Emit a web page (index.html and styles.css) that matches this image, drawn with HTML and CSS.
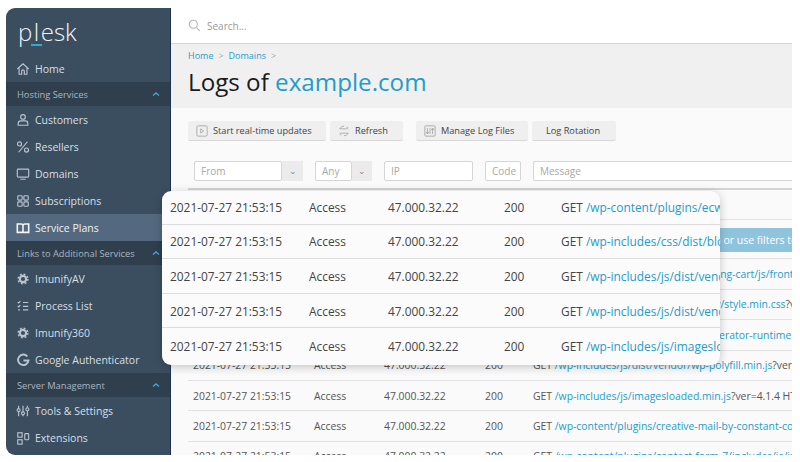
FILE: index.html
```html
<!DOCTYPE html>
<html lang="en">
  <head>
    <meta charset="UTF-8" />
    <meta name="viewport" content="width=device-width, initial-scale=1.0" />
    <title>Logs of example.com</title>
    <link rel="stylesheet" href="styles.css">
  </head>
  <body>
    <div class="window">
      <aside class="sidebar">
        <div class="logo">p<span class="logo-l">l</span>esk</div>
        <a class="nav-item">
          <svg viewBox="0 0 16 16"><path d="M1.5 8 8 2l6.5 6M3.5 7v7h3v-3.5a1.5 1.5 0 0 1 3 0V14h3V7"/></svg>
          Home
        </a>
        <div class="nav-section">Hosting Services <svg viewBox="0 0 10 6"><path d="M2 4.5 5 2l3 2.5"/></svg></div>
        <a class="nav-item">
          <svg viewBox="0 0 16 16"><circle cx="8" cy="4.5" r="2.7"/><path d="M2.5 14v-2c0-2 1.5-3 3-3h5c1.5 0 3 1 3 3v2z"/></svg>
          Customers
        </a>
        <a class="nav-item">
          <svg viewBox="0 0 16 16"><circle cx="4" cy="4.5" r="2.3"/><circle cx="12" cy="11.5" r="2.3"/><path d="M13 2 3 14"/></svg>
          Resellers
        </a>
        <a class="nav-item">
          <svg viewBox="0 0 16 16"><rect x="1.5" y="2.5" width="13" height="9" rx="1"/><path d="M5 14h6"/></svg>
          Domains
        </a>
        <a class="nav-item">
          <svg viewBox="0 0 16 16"><rect x="2" y="2" width="5" height="5" rx="1"/><rect x="9" y="2" width="5" height="5" rx="1"/><rect x="2" y="9" width="5" height="5" rx="1"/><rect x="9" y="9" width="5" height="5" rx="1"/></svg>
          Subscriptions
        </a>
        <a class="nav-item active">
          <svg viewBox="0 0 16 16"><path class="book" d="M1.5 3.5H6c1 0 2 .5 2 1.5 0-1 1-1.5 2-1.5h4.5V13H10c-1 0-2 .5-2 1 0-.5-1-1-2-1H1.5zM8 5v9"/></svg>
          Service Plans
        </a>
        <div class="nav-section">Links to Additional Services <svg viewBox="0 0 10 6"><path d="M2 4.5 5 2l3 2.5"/></svg></div>
        <a class="nav-item">
          <svg viewBox="0 0 16 16"><circle class="gear-ring" cx="8" cy="8" r="3.6"/><circle class="gear-teeth" cx="8" cy="8" r="5.6"/></svg>
          ImunifyAV
        </a>
        <a class="nav-item">
          <svg viewBox="0 0 16 16"><path d="M2 3.5 3 4.5 5 2.5M8 4h6M2 8l1 1 2-2M8 8.5h6M2.5 12.5h2M8 12.5h6"/></svg>
          Process List
        </a>
        <a class="nav-item">
          <svg viewBox="0 0 16 16"><circle class="gear-ring" cx="8" cy="8" r="3.6"/><circle class="gear-teeth" cx="8" cy="8" r="5.6"/></svg>
          Imunify360
        </a>
        <a class="nav-item">
          <svg viewBox="0 0 16 16"><path class="thick" d="M13 4a6 6 0 1 0 1.3 4.5H8.5"/></svg>
          Google Authenticator
        </a>
        <div class="nav-section">Server Management <svg viewBox="0 0 10 6"><path d="M2 4.5 5 2l3 2.5"/></svg></div>
        <a class="nav-item">
          <svg viewBox="0 0 16 16"><path d="M3 2v3M3 9v5M8 2v7M8 12.5V14M13 2v2M13 8v6"/><circle cx="3" cy="7" r="1.7"/><circle cx="8" cy="10.7" r="1.7"/><circle cx="13" cy="6" r="1.7"/></svg>
          Tools &amp; Settings
        </a>
        <a class="nav-item">
          <svg viewBox="0 0 16 16"><rect x="2" y="2" width="5" height="5"/><rect x="2" y="10" width="5" height="5"/><rect x="10" y="3" width="4.5" height="7" rx="1"/></svg>
          Extensions
        </a>
      </aside>

      <main class="main">
        <div class="topbar">
          <svg class="search-icon" viewBox="0 0 16 16"><circle cx="6.5" cy="6.5" r="5"/><path d="m10.5 10.5 4 4"/></svg>
          <span>Search...</span>
        </div>

        <div class="page-head">
          <div class="breadcrumbs">
            <a>Home</a><span class="sep">&gt;</span><a>Domains</a><span class="sep">&gt;</span>
          </div>
          <h1>Logs of <a>example.com</a></h1>
        </div>

        <div class="content">
          <div class="toolbar">
            <button class="btn btn-live">
              <svg viewBox="0 0 14 14"><rect x="1" y="1" width="12" height="12" rx="1.5"/><path d="m5.5 4.5 3.5 2.5-3.5 2.5z"/></svg>
              Start real-time updates
            </button>
            <button class="btn btn-refresh">
              <svg viewBox="0 0 14 14"><path d="M2 4.5h8l2-2M12 4.5l-2-2M12 9.5H4l-2 2M2 9.5l2 2M2 4.5c1-2 3-3 5-3M12 9.5c-1 2-3 3-5 3"/></svg>
              Refresh
            </button>
            <button class="btn btn-manage">
              <svg viewBox="0 0 14 14"><rect x="1" y="1" width="12" height="12" rx="1"/><path d="M4 3.5v7M2.5 8 4 10.5 5.5 8M7 3.5v7M10 10.5v-7M8.5 6 10 3.5 11.500 6"/></svg>
              Manage Log Files
            </button>
            <button class="btn btn-rotation">Log Rotation</button>
          </div>

          <div class="filters">
            <div class="combo combo-from"><div class="field">From</div><div class="drop">&#8964;</div></div>
            <div class="combo combo-any"><div class="field">Any</div><div class="drop">&#8964;</div></div>
            <div class="field field-ip">IP</div>
            <div class="field field-code">Code</div>
            <div class="field field-message">Message</div>
          </div>

          <div class="log-table">
            <div class="log-row"></div>
            <div class="log-banner"><span>Click here to search or use filters to narrow</span></div>
            <div class="log-row"><span>2021-07-27 21:53:15</span><span>Access</span><span>47.000.32.22</span><span>200</span><span>GET <a>/wp-content/plugins/ecwid-shopping-cart/js/frontend.js</a></span></div>
            <div class="log-row"><span>2021-07-27 21:53:15</span><span>Access</span><span>47.000.32.22</span><span>200</span><span>GET <a>/wp-includes/css/dist/block-library/style.min.css</a>?ver=5.8</span></div>
            <div class="log-row"><span>2021-07-27 21:53:15</span><span>Access</span><span>47.000.32.22</span><span>200</span><span>GET <a>/wp-includes/js/dist/vendor/regenerator-runtime.min.js</a></span></div>
            <div class="log-row"><span>2021-07-27 21:53:15</span><span>Access</span><span>47.000.32.22</span><span>200</span><span>GET <a>/wp-includes/js/dist/vendor/wp-polyfill.min.js</a>?ver=7.4.4</span></div>
            <div class="log-row"><span>2021-07-27 21:53:15</span><span>Access</span><span>47.000.32.22</span><span>200</span><span>GET <a>/wp-includes/js/imagesloaded.min.js</a>?ver=4.1.4 HTTP/1.1</span></div>
            <div class="log-row"><span>2021-07-27 21:53:15</span><span>Access</span><span>47.000.32.22</span><span>200</span><span>GET <a>/wp-content/plugins/creative-mail-by-constant-contact/assets</a></span></div>
            <div class="log-row"><span>2021-07-27 21:53:15</span><span>Access</span><span>47.000.32.22</span><span>200</span><span>GET <a>/wp-content/plugins/contact-form-7/includes/js/index.js</a></span></div>
          </div>
        </div>
      </main>
    </div>

    <div class="log-card">
      <div class="card-row"><span>2021-07-27 21:53:15</span><span>Access</span><span>47.000.32.22</span><span>200</span><span>GET <a>/wp-content/plugins/ecwid-shopping-cart</a></span></div>
      <div class="card-row"><span>2021-07-27 21:53:15</span><span>Access</span><span>47.000.32.22</span><span>200</span><span>GET <a>/wp-includes/css/dist/block-library/style.min.css</a></span></div>
      <div class="card-row"><span>2021-07-27 21:53:15</span><span>Access</span><span>47.000.32.22</span><span>200</span><span>GET <a>/wp-includes/js/dist/vendor/regenerator</a></span></div>
      <div class="card-row"><span>2021-07-27 21:53:15</span><span>Access</span><span>47.000.32.22</span><span>200</span><span>GET <a>/wp-includes/js/dist/vendor/wp-polyfill</a></span></div>
      <div class="card-row"><span>2021-07-27 21:53:15</span><span>Access</span><span>47.000.32.22</span><span>200</span><span>GET <a>/wp-includes/js/imagesloaded.min.js</a></span></div>
    </div>
  </body>
</html>
```

FILE: styles.css
```css
body {
  font-family: "Open Sans", sans-serif;
  margin: 0;
  padding: 8px 8px 7px 6px;
  height: 462px;
  box-sizing: border-box;
  background-color: white;
  overflow: hidden;
}
a {
  color: #1f9ccb;
  text-decoration: none;
}
svg {
  fill: none;
  stroke: currentColor;
  stroke-width: 1.3;
}
.window {
  display: flex;
  height: 447px;
}

/* sidebar */
.sidebar {
  width: 165px;
  flex-shrink: 0;
  box-sizing: border-box;
  background-color: #3b4e60;
  border-right: 1px solid #1c3450;
  border-radius: 9px 0 0 9px;
  overflow: hidden;
  color: #d8dfe5;
  font-size: 10.5px;
}
.logo {
  height: 47px;
  padding: 9px 0 0 12px;
  box-sizing: border-box;
  color: #f2f5f7;
  font-size: 24px;
  font-weight: 300;
  line-height: 30px;
}
.logo-l {
  display: inline-block;
  height: 27px;
  line-height: 30px;
  border-bottom: 2px solid #37a8d6;
  padding: 0 2.5px;
  margin: 0 -1px;
  vertical-align: top;
}
.nav-item {
  display: flex;
  align-items: center;
  gap: 5px;
  height: 27px;
  padding-left: 10px;
  color: #d8dfe5;
}
.nav-item svg {
  width: 14px;
  height: 14px;
  flex-shrink: 0;
  color: #b9c4ce;
}
.nav-item.active {
  background-color: #54697f;
  color: #eef2f5;
}
.nav-item.active svg {
  color: #f4f6f8;
}
.book {
  stroke-width: 1.8;
}
.gear-ring {
  stroke-width: 2.4;
}
.gear-teeth {
  stroke-width: 1.6;
  stroke-dasharray: 2.2 2.2;
}
.thick {
  stroke-width: 2.2;
}
.nav-section {
  display: flex;
  align-items: center;
  justify-content: space-between;
  height: 24px;
  padding: 0 9px 0 11px;
  background-color: #2f3f4e;
  color: #a9b5c0;
  font-size: 9.3px;
}
.nav-section svg {
  width: 10px;
  height: 6px;
  color: #3fa9d6;
  stroke-width: 1.4;
}

/* main column */
.main {
  flex: 1;
  min-width: 0;
  display: flex;
  flex-direction: column;
  overflow: hidden;
}
.topbar {
  height: 35px;
  flex-shrink: 0;
  display: flex;
  align-items: center;
  gap: 6px;
  padding-left: 17px;
  background-color: white;
  border-bottom: 1px solid #d4d4d4;
  color: #9a9a9a;
  font-size: 10px;
}
.search-icon {
  width: 13px;
  height: 13px;
  color: #b4b4b4;
}
.page-head {
  height: 64px;
  flex-shrink: 0;
  box-sizing: border-box;
  padding: 6px 0 0 17px;
  background-color: #f0f0f0;
}
.breadcrumbs {
  font-size: 9px;
  line-height: 12px;
  color: #aaa;
}
.sep {
  margin: 0 5px;
  font-size: 9px;
}
h1 {
  margin: 4px 0 0;
  font-size: 24.2px;
  font-weight: 400;
  line-height: 32px;
  color: #1a1a1a;
}

/* content */
.content {
  flex: 1;
  min-height: 0;
  background-color: #fafafa;
  padding: 13px 0 0 17px;
}
.toolbar {
  display: flex;
  gap: 4px;
}
.btn {
  display: flex;
  align-items: center;
  gap: 5px;
  height: 20px;
  box-sizing: border-box;
  padding: 0 0 0 8px;
  font-family: inherit;
  font-size: 9.2px;
  font-weight: 500;
  color: #444;
  background-color: #efefef;
  border: none;
  border-bottom: 1px solid #d8d8d8;
  border-radius: 2px;
}
.btn svg {
  width: 12px;
  height: 12px;
  color: #a5a5a5;
  stroke-width: 1;
}
.btn-live {
  width: 138px;
}
.btn-refresh {
  width: 73px;
}
.btn-manage {
  width: 112px;
  margin-left: 9px;
}
.btn-rotation {
  width: 84px;
  padding-left: 14px;
}
.filters {
  display: flex;
  gap: 12px;
  margin-top: 20px;
  padding-left: 6px;
}
.combo {
  display: flex;
}
.field {
  height: 20px;
  box-sizing: border-box;
  padding-left: 6px;
  border: 1px solid #d5d5d5;
  border-radius: 2px;
  background-color: white;
  color: #a8a8a8;
  font-size: 10px;
  line-height: 18px;
}
.drop {
  width: 21px;
  height: 20px;
  background-color: #ebebeb;
  color: #888;
  font-size: 9px;
  line-height: 20px;
  text-align: center;
}
.combo-from .field {
  width: 88px;
}
.combo-any .field {
  width: 37px;
}
.combo-any .drop {
  width: 20px;
}
.field-ip {
  width: 89px;
}
.field-code {
  width: 36px;
}
.field-message {
  flex: 1;
  border-right: none;
  border-radius: 2px 0 0 2px;
}

/* log table behind the card */
.log-table {
  margin-top: 7px;
  border-top: 2px solid #d4d4d4;
  color: #555;
  font-size: 10.4px;
}
.log-row {
  display: grid;
  grid-template-columns: 121px 70px 101px 48px 1fr;
  align-items: center;
  height: 30.4px;
  box-sizing: border-box;
  padding-left: 5px;
  border-bottom: 1px solid #e2e2e2;
  white-space: nowrap;
  overflow: hidden;
}
.log-banner {
  height: 39px;
  box-sizing: border-box;
  padding: 8px 0;
  border-bottom: 1px solid #e2e2e2;
}
.log-banner span {
  display: block;
  height: 24px;
  padding-left: 437px;
  background-color: #8fc4df;
  color: white;
  font-size: 10.5px;
  line-height: 24px;
  white-space: nowrap;
  overflow: hidden;
}

/* zoomed card that lies over the table */
.log-card {
  position: absolute;
  left: 162px;
  top: 191px;
  width: 558px;
  height: 174px;
  box-sizing: border-box;
  background-color: #fbfbfb;
  border-radius: 9px;
  box-shadow: 0 2px 10px rgba(0, 0, 0, 0.22);
  overflow: hidden;
  color: #444;
  font-size: 11.9px;
}
.card-row {
  display: grid;
  grid-template-columns: 139px 79px 116px 57px 1fr;
  align-items: center;
  height: 34.6px;
  box-sizing: border-box;
  padding-left: 8px;
  border-bottom: 1px solid #dcdcdc;
  white-space: nowrap;
}
.card-row:first-child {
  height: 33.6px;
}
.card-row:last-child {
  border-bottom: none;
}
```
